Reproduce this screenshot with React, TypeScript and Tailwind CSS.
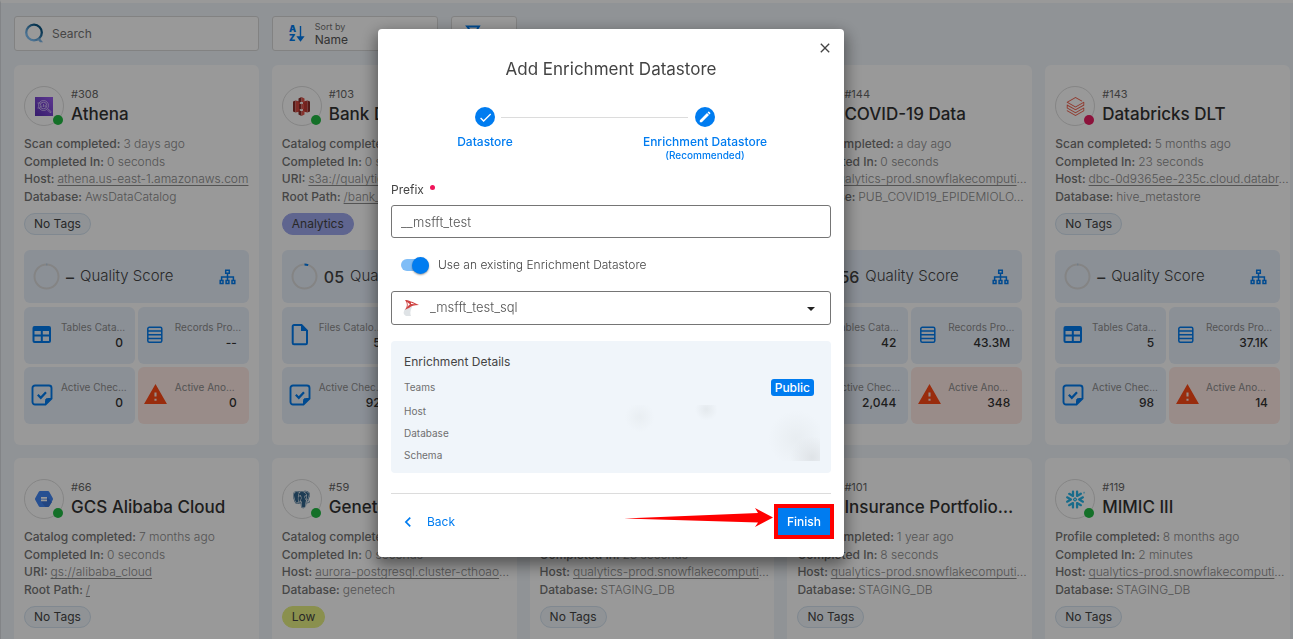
import type { ReactNode } from "react";
import { BiLogoPostgresql } from "react-icons/bi";
import { MdCheck, MdChevronLeft, MdClose, MdWarning } from "react-icons/md";
import { SiDatabricks, SiSnowflake } from "react-icons/si";

type Metric = { label: string; value: string };

type Datastore = {
  id: string;
  name: string;
  logo: "athena" | "s3" | "gcs" | "postgres" | "snowflake" | "databricks";
  failed?: boolean;
  operation: string;
  when: string;
  took: string;
  source: { label: string; value: string; clipped?: boolean };
  location: { label: string; value: string; link?: boolean; clipped?: boolean };
  tag?: "No Tags" | "Analytics" | "Low";
  score: string;
  files?: boolean;
  catalog: Metric;
  records: string;
  checks: string;
  anomalies: string;
};

const tables = (value: string): Metric => ({ label: "Tables Cata…", value });
const files = (value: string): Metric => ({ label: "Files Catalo…", value });

const datastores: Datastore[] = [
  {
    id: "#308", name: "Athena", logo: "athena", operation: "Scan completed", when: "3 days ago", took: "0 seconds",
    source: { label: "Host", value: "athena.us-east-1.amazonaws.com" },
    location: { label: "Database", value: "AwsDataCatalog" },
    tag: "No Tags", score: "–", catalog: tables("0"), records: "--", checks: "0", anomalies: "0",
  },
  {
    id: "#103", name: "Bank Dataset", logo: "s3", operation: "Catalog completed", when: "1 year ago", took: "0 seconds",
    source: { label: "URI", value: "s3a://qualytics-demo-data" },
    location: { label: "Root Path", value: "/bank_dataset/", link: true },
    tag: "Analytics", score: "05", files: true, catalog: files("5"), records: "9.6M", checks: "92", anomalies: "12",
  },
  {
    id: "#145", name: "Consumer Data", logo: "snowflake", operation: "Scan completed", when: "1 month ago", took: "3 seconds",
    source: { label: "Host", value: "qualytics-prod.snowflakecomputi", clipped: true },
    location: { label: "Database", value: "STAGING_DB" },
    tag: "No Tags", score: "40", catalog: tables("8"), records: "1.2M", checks: "64", anomalies: "7",
  },
  {
    id: "#144", name: "COVID-19 Data", logo: "snowflake", operation: "Scan completed", when: "a day ago", took: "0 seconds",
    source: { label: "Host", value: "qualytics-prod.snowflakecomputi", clipped: true },
    location: { label: "Database", value: "PUB_COVID19_EPIDEMIOLO", clipped: true },
    score: "56", catalog: tables("42"), records: "43.3M", checks: "2,044", anomalies: "348",
  },
  {
    id: "#143", name: "Databricks DLT", logo: "databricks", failed: true, operation: "Scan completed", when: "5 months ago", took: "23 seconds",
    source: { label: "Host", value: "dbc-0d9365ee-235c.cloud.databr", clipped: true },
    location: { label: "Database", value: "hive_metastore" },
    tag: "No Tags", score: "–", catalog: tables("5"), records: "37.1K", checks: "98", anomalies: "14",
  },
  {
    id: "#66", name: "GCS Alibaba Cloud", logo: "gcs", operation: "Catalog completed", when: "7 months ago", took: "0 seconds",
    source: { label: "URI", value: "gs://alibaba_cloud" },
    location: { label: "Root Path", value: "/", link: true },
    tag: "No Tags", score: "–", files: true, catalog: files("2"), records: "--", checks: "0", anomalies: "0",
  },
  {
    id: "#59", name: "Genetech", logo: "postgres", operation: "Catalog completed", when: "1 month ago", took: "0 seconds",
    source: { label: "Host", value: "aurora-postgresql.cluster-cthoao", clipped: true },
    location: { label: "Database", value: "genetech" },
    tag: "Low", score: "47", catalog: tables("3"), records: "2.1K", checks: "31", anomalies: "4",
  },
  {
    id: "#102", name: "Human Resources", logo: "snowflake", operation: "Scan completed", when: "1 year ago", took: "23 seconds",
    source: { label: "Host", value: "qualytics-prod.snowflakecomputi", clipped: true },
    location: { label: "Database", value: "STAGING_DB" },
    tag: "No Tags", score: "38", catalog: tables("6"), records: "12K", checks: "80", anomalies: "9",
  },
  {
    id: "#101", name: "Insurance Portfolio…", logo: "snowflake", operation: "Scan completed", when: "1 year ago", took: "8 seconds",
    source: { label: "Host", value: "qualytics-prod.snowflakecomputi", clipped: true },
    location: { label: "Database", value: "STAGING_DB" },
    tag: "No Tags", score: "61", catalog: tables("4"), records: "73K", checks: "120", anomalies: "18",
  },
  {
    id: "#119", name: "MIMIC III", logo: "snowflake", operation: "Profile completed", when: "8 months ago", took: "2 minutes",
    source: { label: "Host", value: "qualytics-prod.snowflakecomputi", clipped: true },
    location: { label: "Database", value: "STAGING_DB" },
    tag: "No Tags", score: "35", catalog: tables("26"), records: "110M", checks: "410", anomalies: "22",
  },
];

function Logo({ kind }: { kind: Datastore["logo"] }) {
  if (kind === "snowflake") return <SiSnowflake size={19} color="#29b5e8" />;
  if (kind === "databricks") return <SiDatabricks size={19} color="#f0604d" />;
  if (kind === "postgres") return <BiLogoPostgresql size={21} color="#31648c" />;
  if (kind === "gcs")
    return (
      <svg width="18" height="16" viewBox="0 0 18 16" aria-hidden="true">
        <path d="M5 0h8a1.4 1.4 0 0 1 1.200.7l3.500 6.300a2 2 0 0 1 0 2l-3.500 6.300A1.400 1.400 0 0 1 13 16H5a1.400 1.400 0 0 1-1.200-.7L.3 9a2 2 0 0 1 0-2L3.800.7A1.400 1.400 0 0 1 5 0Z" fill="#4285f4" />
        <path d="M12 6l5 5-2.800 4.300A1.400 1.400 0 0 1 13 16h-2.500L6 10.500Z" fill="#3a74d8" />
        <path d="M6 6h6v1.700H6zM6 8.500h6v1.800H6z" fill="#fff" />
      </svg>
    );
  if (kind === "s3")
    return (
      <svg width="17" height="19" viewBox="0 0 17 19" aria-hidden="true">
        <path d="M0 4.500 2.500 3.500v12L0 14.500Z" fill="#8c2d28" />
        <path d="M2.500 3.500 7 4.500v10l-4.500 1Z" fill="#d64a41" />
        <path d="M17 4.500 14.500 3.500v12l2.500-1Z" fill="#8c2d28" />
        <path d="M14.500 3.500 10 4.500v10l4.500 1Z" fill="#c23a33" />
        <path d="M5.500 1.500 8.500 0v5l-3 .5ZM5.500 17.500l3 1.500v-5l-3-.5ZM6 7l2.500-.3v5.600L6 12Z" fill="#8c2d28" />
        <path d="M11.500 1.500 8.500 0v5l3 .5ZM11.500 17.500l-3 1.500v-5l3-.5ZM11 7l-2.500-.3v5.600L11 12Z" fill="#e0564c" />
      </svg>
    );
  return (
    <svg width="18" height="19" viewBox="0 0 18 19" aria-hidden="true">
      <defs>
        <linearGradient id="athena-fill" x1="0" y1="1" x2="1" y2="0">
          <stop offset="0" stopColor="#5a30b5" />
          <stop offset="1" stopColor="#9a5cf0" />
        </linearGradient>
      </defs>
      <path d="M0 0h18v19H0z" fill="url(#athena-fill)" />
      <g fill="none" stroke="#e3d5ff" strokeWidth=".7">
        <circle cx="8.500" cy="8.500" r="5" />
        <circle cx="8.500" cy="8.500" r="3.300" />
        <path d="M6.800 10V8.500M8.500 10V7M10.200 10V8M12 12.500l3.300 3.300 1-1-3.500-3M2.500 6h3M2.500 11h3" />
      </g>
    </svg>
  );
}

function TableIcon() {
  return (
    <svg width="20" height="20" viewBox="0 0 20 20" aria-hidden="true">
      <path fill="#007cf0" fillRule="evenodd" d="M2.500 1h14.500a2 2 0 0 1 2 2v13a2 2 0 0 1-2 2H2.500a2 2 0 0 1-2-2V3a2 2 0 0 1 2-2ZM2.500 6v3.500h6.300V6Zm8.300 0v3.500H17V6ZM2.500 11.500v4.500h6.300v-4.500Zm8.300 0v4.500H17v-4.500Z" />
    </svg>
  );
}

function RecordsIcon() {
  return (
    <svg width="20" height="20" viewBox="0 0 20 20" fill="none" stroke="#007cf0" strokeWidth="1.500" aria-hidden="true">
      <rect x="1.800" y="2.300" width="14" height="15" rx="1.500" />
      <path d="M2 6h14M2 9.800h14M2 13.500h14" />
    </svg>
  );
}

function FileIcon() {
  return (
    <svg width="20" height="24" viewBox="0 0 20 24" aria-hidden="true">
      <path d="M4 2h7.500L17 7.700V20a1.300 1.300 0 0 1-1.300 1.300H4A1.300 1.300 0 0 1 2.700 20V3.300A1.300 1.300 0 0 1 4 2Z" fill="none" stroke="#007cf0" strokeWidth="2" />
      <path d="M11 1.500 17.500 8H11Z" fill="#007cf0" />
    </svg>
  );
}

function CheckNoteIcon() {
  return (
    <svg width="22" height="22" viewBox="0 0 22 22" fill="none" stroke="#007cf0" strokeWidth="1.900" aria-hidden="true">
      <path d="M4 1.500h14a2.500 2.500 0 0 1 2.500 2.500v10.500L14.500 20.500H4A2.500 2.500 0 0 1 1.500 18V4A2.500 2.500 0 0 1 4 1.500Z" />
      <path d="M14.500 20.500v-4a2 2 0 0 1 2-2h4Z" fill="#007cf0" strokeWidth="1" />
      <path d="m6.800 10.800 3 3 5.200-5.600" strokeWidth="2.200" />
    </svg>
  );
}

function LineageIcon() {
  return (
    <svg width="17" height="16" viewBox="0 0 17 16" fill="none" stroke="#007cf0" strokeWidth="1.500" aria-hidden="true">
      <path d="M6.700 1.200h3.600v3H6.700zM1.200 11.500h2.800v3H1.200zM7.100 11.500h2.800v3H7.100zM13 11.500h2.800v3H13zM8.500 4.200v7.300M2.600 11.500V8h11.800v3.500" />
    </svg>
  );
}

function ScoreRing({ score }: { score: string }) {
  const circumference = 75.4;
  const share = score === "–" ? 0.01 : Number(score) / 100;
  return (
    <svg width="27" height="27" viewBox="0 0 27 27" fill="none" strokeWidth="2" aria-hidden="true">
      <circle cx="13.500" cy="13.500" r="12" stroke="#dcdcdc" />
      <circle
        cx="13.500" cy="13.500" r="12" transform="rotate(-90 13.500 13.500)"
        stroke={score === "–" ? "#9fc4e8" : "#007cf0"}
        strokeDasharray={`${share * circumference} ${circumference}`}
      />
    </svg>
  );
}

function Tile({ icon, label, value, alert }: Metric & { icon: ReactNode; alert?: boolean }) {
  return (
    <div className={`flex h-[57px] items-center justify-between rounded-md pr-3 pb-[2px] pl-[7px] ${alert ? "bg-[#ffe9e4]" : "bg-[#e8f0fb]"}`}>
      <span className="flex w-[22px] justify-center">{icon}</span>
      <span className="flex w-[62px] flex-col">
        <span className="whitespace-nowrap text-[10px] leading-4 text-[#8c8c8c]">{label}</span>
        <span className="text-right text-xs leading-4 font-medium text-[#333]">{value}</span>
      </span>
    </div>
  );
}

const tagStyles = {
  "No Tags": "border-[#d5e3f0] bg-[#f0f5fa]",
  Analytics: "border-[#9fa8ee] bg-[#9fa8ee]",
  Low: "border-[#e6f082] bg-[#e6f082]",
};

function Detail({ label, value, link, clipped }: { label: string; value: string; link?: boolean; clipped?: boolean }) {
  return (
    <div className="flex items-center gap-[3px] whitespace-nowrap">
      <dt className="font-medium text-[#757575]">{label}:</dt>
      <dd className="font-light text-[#8c8c8c]">
        {link ? <a href="#source" className="underline underline-offset-2">{value}</a> : value}
        {clipped && "…"}
      </dd>
    </div>
  );
}

function DatastoreCard({ store }: { store: Datastore }) {
  return (
    <article className="flex h-[380px] min-w-0 flex-col overflow-hidden rounded-md bg-white px-[10px] pt-[21px]">
      <header className="flex items-center gap-[7px]">
        <span className="relative flex size-10 shrink-0 items-center justify-center rounded-full border border-[#dedede]">
          <Logo kind={store.logo} />
          <span className={`absolute right-0 bottom-0 size-[10px] rounded-full ${store.failed ? "bg-[#e91e63]" : "bg-[#22bb44]"}`} />
        </span>
        <div className="min-w-0 whitespace-nowrap">
          <p className="text-[11px] leading-4 text-[#666]">{store.id}</p>
          <h2 className="text-[17px] leading-6 font-medium text-[#333]">{store.name}</h2>
        </div>
      </header>
      <dl className="mt-[9px] grid h-[70px] grid-rows-4 text-xs leading-[17px]">
        <Detail label={store.operation} value={store.when} />
        <Detail label="Completed In" value={store.took} />
        <Detail link {...store.source} />
        <Detail {...store.location} />
      </dl>
      <div className="mt-2 flex h-[22px]">
        {store.tag && (
          <span className={`flex items-center rounded-full border px-[9px] text-xs text-[#444] ${tagStyles[store.tag]}`}>
            {store.tag}
          </span>
        )}
      </div>
      <div className="mt-[15px] flex h-[53px] shrink-0 items-center rounded-md bg-[#e8f0fb] pr-[13px] pl-[9px] text-[#444]">
        <ScoreRing score={store.score} />
        <span className="ml-[6px] text-base font-medium">{store.score}</span>
        <span className="ml-[6px] flex-1 text-[15px] font-light whitespace-nowrap">Quality Score</span>
        <LineageIcon />
      </div>
      <div className="mt-1 grid grid-cols-2 gap-[3px]">
        <Tile icon={store.files ? <FileIcon /> : <TableIcon />} {...store.catalog} />
        <Tile icon={<RecordsIcon />} label="Records Pro…" value={store.records} />
        <Tile icon={<CheckNoteIcon />} label="Active Chec…" value={store.checks} />
        <Tile alert icon={<MdWarning size={25} color="#ff4a17" className="shrink-0" />} label="Active Ano…" value={store.anomalies} />
      </div>
    </article>
  );
}

function Toolbar() {
  const box = "flex h-[35px] items-center rounded-[3px] border border-[#d9d9d9] bg-white pb-px";
  return (
    <div className="grid grid-cols-5 gap-[13px]">
      <label className={`${box} gap-2 pl-[9px]`}>
        <svg width="20" height="20" viewBox="0 0 20 20" aria-hidden="true">
          <defs>
            <linearGradient id="brand-ring" x1="1" y1="0" x2="0" y2="1">
              <stop offset=".2" stopColor="#0b5583" />
              <stop offset=".8" stopColor="#7fc0f5" />
            </linearGradient>
          </defs>
          <circle cx="10" cy="9.500" r="7.800" fill="none" stroke="url(#brand-ring)" strokeWidth="2.300" />
          <path d="M12.500 15.500h3.500l3 3.800h-3Z" fill="#7fb8e6" />
        </svg>
        <input type="search" aria-label="Search" placeholder="Search" className="h-5 min-w-0 flex-1 bg-transparent text-xs outline-none placeholder:text-[#757575]" />
      </label>
      <button type="button" className={`${box} mr-[79px] w-[166px] pl-[15px] text-left`}>
        <svg width="20" height="20" viewBox="0 0 20 20" aria-hidden="true">
          <g fill="#007cf0" fontFamily="Inter, sans-serif" fontWeight="900" fontSize="9">
            <text x="1" y="9">A</text>
            <text x="1" y="17.500">Z</text>
          </g>
          <path d="M12.500 3v13M9.800 14h5.400L12.500 17.500Z" fill="#007cf0" stroke="#007cf0" strokeWidth="1.400" />
        </svg>
        <span className="ml-[7px] flex flex-col">
          <span className="text-[9px] leading-3 text-[#757575]">Sort by</span>
          <span className="text-xs leading-[13px] text-[#555]">Name</span>
        </span>
      </button>
      <button type="button" aria-label="Filter" className={`${box} -ml-[79px] w-[66px] justify-start pl-[11px]`}>
        <svg width="22" height="22" viewBox="0 0 22 22" fill="none" stroke="#007cf0" strokeWidth="1.800" aria-hidden="true">
          <path d="M4 4.500h12L12.500 10v6.500l-4-2V10Z" />
        </svg>
      </button>
    </div>
  );
}

function Step({ label, note, icon }: { label: string; note?: string; icon: ReactNode }) {
  return (
    <li className="flex w-[140px] flex-col items-center text-[#007cf0]">
      <span className="flex size-5 items-center justify-center rounded-full bg-[#007cf0] text-white">{icon}</span>
      <span className="mt-[7px] text-xs leading-4 font-medium">{label}</span>
      {note && <span className="text-[10px] leading-[10px] font-medium">{note}</span>}
    </li>
  );
}

function EnrichmentDialog() {
  return (
    <div role="dialog" aria-modal="true" aria-labelledby="dialog-title" className="h-fit w-[466px] rounded bg-white px-[13px] pb-[22px] text-[#444] shadow-[0_6px_16px_2px_rgba(0,0,0,0.45)]">
      <div className="flex h-7 items-start justify-end pt-[13px]">
        <button type="button" aria-label="Close" className="flex size-3 items-center justify-center"><MdClose size={16} className="shrink-0" /></button>
      </div>
      <h1 id="dialog-title" className="text-center text-[17px] leading-6 font-normal">Add Enrichment Datastore</h1>
      <div className="relative mt-[26px]">
        <ol className="flex justify-center gap-20 pr-8">
          <Step label="Datastore" icon={<MdCheck size={15} />} />
          <Step
            label="Enrichment Datastore"
            note="(Recommended)"
            icon={
              <svg width="12" height="12" viewBox="0 0 12 12" aria-hidden="true">
                <path d="M.8 9.200 8 2l2 2-7.200 7.200H.8ZM8.600 1.400l.6-.6a.7.7 0 0 1 1 0l1 1a.7.7 0 0 1 0 1l-.6.6Z" fill="#fff" />
              </svg>
            }
          />
        </ol>
        <span className="absolute top-[10px] right-[143px] left-[110px] h-px bg-[#dcdcdc]" />
      </div>
      <label htmlFor="prefix" className="mt-5 flex h-5 items-center gap-[6px] text-xs">
        Prefix <span className="mb-[5px] size-[5px] rounded-full bg-[#f0145a]" />
      </label>
      <input id="prefix" defaultValue="__msfft_test" className="mt-[5px] h-[33px] w-full rounded-[3px] border border-[#757575] px-[9px] text-[13px] font-light text-[#555] outline-none" />
      <label className="mt-[17px] flex h-5 items-center pl-[10px] text-xs font-light">
        <input type="checkbox" role="switch" defaultChecked className="peer sr-only" />
        <span className="flex h-3 w-[28px] items-center justify-end rounded-full bg-[#7fbdf7]">
          <span className="size-[17px] shrink-0 rounded-full bg-[#007cf0] shadow-[0_1px_2px_rgba(0,0,0,0.4)]" />
        </span>
        <span className="ml-[9px]">Use an existing Enrichment Datastore</span>
      </label>
      <div className="relative mt-4">
        <select aria-label="Enrichment datastore" className="h-[34px] w-full appearance-none rounded-[3px] border border-[#757575] bg-white pr-8 pl-[38px] text-[13px] font-light text-[#555] outline-none">
          <option>_msfft_test_sql</option>
        </select>
        <svg width="18" height="18" viewBox="0 0 18 18" className="pointer-events-none absolute top-2 left-3" aria-hidden="true">
          <path d="M1 12c1-3 3-4 8-4-2 4-2 7-1 9H3c-2-1-3-3-2-5Z" fill="#dfe3e6" />
          <path d="M2 1c3 0 8 2 14 5-5 0-8 1-10 3-2 1-3 1-4 2 2-3 3-6 0-10Zm2 2c1 2 1 4 0 5l3-2.800Zm4 .5 0 1.500 4 .3Z" fill="#cf4444" fillRule="evenodd" />
        </svg>
        <svg width="8" height="4" viewBox="0 0 8 4" className="pointer-events-none absolute top-4 right-4" aria-hidden="true">
          <path d="M0 0h8L4 4Z" fill="#222" />
        </svg>
      </div>
      <section className="relative mt-4 h-[132px] rounded bg-[#f0f5fa] px-[13px] pt-[12px] pr-[17px] text-[10px] text-[#6f6f6f]">
        <h2 className="text-xs leading-[18px] text-[#444]">Enrichment Details</h2>
        <dl>
          <div className="mt-[5px] flex h-[22px] items-center justify-between">
            <dt>Teams</dt>
            <dd className="rounded-[3px] bg-[#007cf0] px-1 text-xs leading-[17px] font-medium text-white">Public</dd>
          </div>
          <div className="mt-[2px] flex h-[22px] items-center"><dt>Host</dt></div>
          <div className="flex h-[22px] items-center"><dt>Database</dt></div>
          <div className="flex h-[22px] items-center"><dt>Schema</dt></div>
        </dl>
        <div aria-hidden="true" className="absolute top-16 right-[11px] h-14 w-[196px] bg-[radial-gradient(circle_at_42%_8%,#e4e9ed_0,transparent_9%),radial-gradient(circle_at_8%_22%,#e9eef2_0,transparent_8%),radial-gradient(circle_at_96%_94%,#dfe3e7_0,transparent_11%),radial-gradient(circle_at_88%_60%,#e8edf1_0,transparent_16%)]" />
      </section>
      <footer className="relative mt-5 border-t border-[#dcdcdc] pt-[14px]">
        <div className="flex h-[27px] items-center justify-between pr-px">
          <button type="button" className="flex items-center gap-[9px] pl-[7px] text-xs text-[#007cf0]">
            <MdChevronLeft size={20} /> Back
          </button>
          <button type="button" className="h-[27px] w-[52px] bg-[#007cf0] text-xs font-medium text-white ring-4 ring-[#ff0000]">Finish</button>
        </div>
        <svg width="150" height="22" viewBox="0 0 150 22" className="absolute top-[13px] right-[57px]" aria-hidden="true">
          <path d="M0 11.500 134 6 131 1 149 10.500 131 20l3-4.500Z" fill="#ff0000" />
        </svg>
      </footer>
    </div>
  );
}

export default function App() {
  return (
    <div className="h-screen overflow-hidden bg-[#f0f5fa] font-['Inter',sans-serif]">
      <main className="h-full border-t-3 border-l border-t-white border-l-[#d9dde1] pt-[13px] pr-[3px] pl-[13px]">
        <Toolbar />
        <section className="mt-[14px] grid grid-cols-5 gap-[13px]">
          {datastores.map((store) => <DatastoreCard key={store.id} store={store} />)}
        </section>
      </main>
      <div className="fixed inset-0 flex items-start justify-center bg-black/40 pt-[29px] pr-[71px]">
        <EnrichmentDialog />
      </div>
    </div>
  );
}
